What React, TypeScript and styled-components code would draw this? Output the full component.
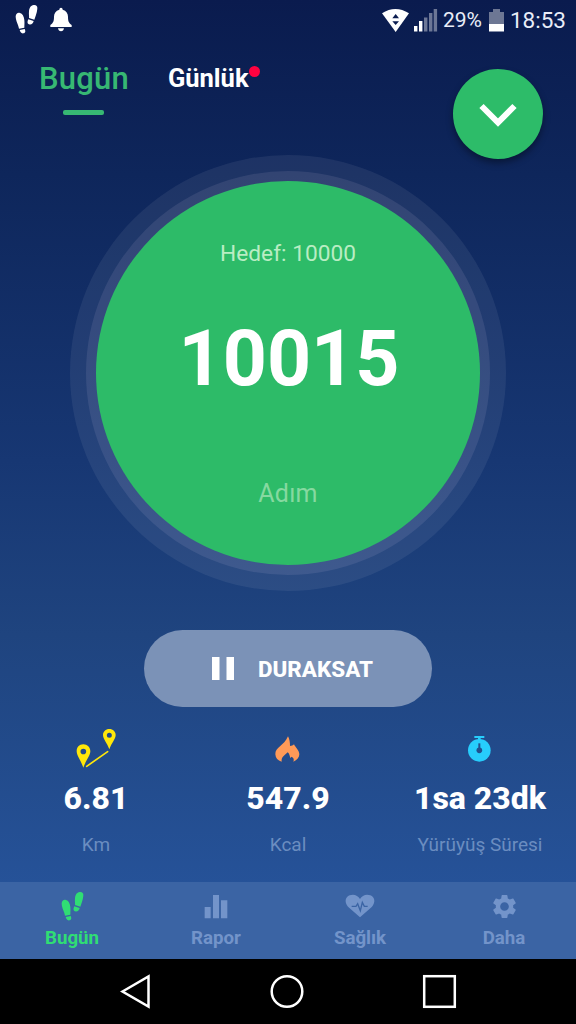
import React from "react";
import styled, { createGlobalStyle } from "styled-components";

const GlobalStyle = createGlobalStyle`
  * { box-sizing: border-box; }
  body { margin: 0; background: #000; font-family: Roboto, "Noto Sans", sans-serif; }
  svg { display: block; flex: none; overflow: visible; }
`;

const Screen = styled.main`
  width: 576px;
  height: 1024px;
  display: flex;
  flex-direction: column;
  overflow: hidden;
  color: #fff;
  background: linear-gradient(180deg, #0a1b4e 0%, #0e265b 17%, #173773 45%, #1f447f 62%, #26539a 88%);
`;

const Text = styled.span<{
  $size: number;
  $weight?: number;
  $line?: number;
  $color?: string;
  $spacing?: number;
}>`
  display: block;
  white-space: nowrap;
  font-size: ${(p) => p.$size}px;
  font-weight: ${(p) => p.$weight ?? 400};
  line-height: ${(p) => p.$line ?? p.$size}px;
  color: ${(p) => p.$color ?? "#fff"};
  letter-spacing: ${(p) => p.$spacing ?? 0}px;
`;

const StatusBar = styled.div`
  height: 38px;
  display: flex;
  justify-content: space-between;
  padding: 0 10px 0 14px;
`;

const StatusLeft = styled.div`
  display: flex;
  gap: 12px;
  padding-top: 4px;
`;

const StatusRight = styled.div`
  display: flex;
  align-items: center;
  height: 40px;
`;

const BatteryIcon = styled.svg`
  margin: 0 6px 0 7px;
`;

const SignalIcon = styled.svg`
  margin: 0 6px 0 5px;
`;

const BellIcon = styled.svg`
  margin-top: 3px;
`;

const Header = styled.header`
  height: 117px;
  display: flex;
  padding: 0 33.5px 0 39px;
`;

const Tab = styled.button<{ $gap?: number; $top?: number }>`
  border: 0;
  padding: ${(p) => p.$top ?? 0}px 0 0;
  background: none;
  font-family: inherit;
  display: flex;
  flex-direction: column;
  align-items: center;
  align-self: flex-start;
  margin-left: ${(p) => p.$gap ?? 0}px;
  position: relative;
`;

const TabLine = styled.span`
  width: 41px;
  height: 5px;
  margin-top: 1px;
  border-radius: 2px;
  background: #37b873;
`;

const Dot = styled.span`
  position: absolute;
  right: -11px;
  top: 28px;
  width: 11px;
  height: 11px;
  border-radius: 50%;
  background: #ff0240;
`;

const RoundButton = styled.button`
  width: 90px;
  height: 90px;
  margin: 30.5px 0 0 auto;
  padding: 4px 0 0;
  border: 0;
  border-radius: 50%;
  background: #2dbc69;
  box-shadow: 0 4px 7px rgba(0, 0, 0, 0.38);
  display: flex;
  align-items: center;
  justify-content: center;
`;

const OuterRing = styled.section`
  width: 436px;
  height: 436px;
  margin: 0 auto;
  flex: none;
  border-radius: 50%;
  background: rgba(255, 255, 255, 0.065);
  display: grid;
  place-items: center;
`;

const InnerRing = styled.div`
  width: 404px;
  height: 404px;
  border-radius: 50%;
  background: rgba(255, 230, 255, 0.09);
  display: grid;
  place-items: center;
`;

const Disc = styled.div`
  width: 384px;
  height: 384px;
  border-radius: 50%;
  background: #2dbb68;
  display: flex;
  flex-direction: column;
  align-items: center;
  padding-top: 58px;
`;

const StepCount = styled(Text)`
  margin: 58px 0 78px 2px;
`;

const PauseButton = styled.button`
  width: 288px;
  height: 77px;
  margin: 38.5px auto 0;
  flex: none;
  border: 0;
  padding: 0 0 0 68px;
  border-radius: 39px;
  background: #7b92b7;
  font-family: inherit;
  display: flex;
  align-items: center;
  gap: 24px;
`;

const PauseLabel = styled(Text)`
  padding-top: 2px;
`;

const Stats = styled.section`
  flex: 1;
  display: grid;
  grid-template-columns: repeat(3, 192px);
  padding-top: 22.5px;
`;

const Stat = styled.div`
  display: flex;
  flex-direction: column;
  align-items: center;
`;

const StatLabel = styled(Text)`
  margin-top: 8px;
`;

const BottomNav = styled.nav`
  height: 77px;
  flex: none;
  display: grid;
  grid-template-columns: repeat(4, 144px);
  background: #3b64a4;
`;

const NavItem = styled.button`
  border: 0;
  padding: 7px 0 0;
  background: none;
  font-family: inherit;
  display: flex;
  flex-direction: column;
  align-items: center;
`;

const NavIcon = styled.span`
  height: 36px;
  padding-bottom: 2px;
  display: flex;
  align-items: center;
`;

const SystemBar = styled.footer`
  height: 65px;
  flex: none;
  background: #000;
  display: flex;
  align-items: center;
  justify-content: center;
`;

const muted = "#7394ca";

function Footprints({ color }: { color: string }) {
  return (
    <svg width="24" height="30" viewBox="-2 0 72 90" fill={color}>
      <path d="M3 37C4 29 9 25 16 27C23 29 28 37 29 48C30 56 29 65 29 71L13 74C12 65 3 51 3 37Z" />
      <path d="M15 78L30 75C33 81 33 87 26 88C19 89 17 84 15 78Z" />
      <path d="M68 14C69 6 64 2 57 3C48 4 44 12 43 22C42 30 44 37 43 42L59 47C61 40 67 27 68 14Z" />
      <path d="M41 46L57 51C55 59 50 63 43 61C37 59 38 52 41 46Z" />
    </svg>
  );
}

function Bell() {
  return (
    <BellIcon width="22" height="25" viewBox="0 0 66 75" fill="#fff">
      <path d="M33 2C36 2 38 4 38 8C49 11 54 19 54 29C54 42 56 47 65 54V60H1V54C10 47 12 42 12 29C12 19 17 11 28 8C28 4 30 2 33 2Z" />
      <path d="M24 64H42C41 70 38 73 33 73C28 73 25 70 24 64Z" />
    </BellIcon>
  );
}

function Wifi() {
  return (
    <svg width="27" height="23" viewBox="0 0 81 69">
      <path d="M0 13Q40-13 81 13L41 69Z" fill="#fff" />
      <path d="M41 15L51 28H31ZM31 37H51L41 48Z" fill="#0b1d50" />
    </svg>
  );
}

function Signal() {
  const bars = [
    [0, 17, 1],
    [5, 12, 1],
    [10, 8.5, 0.4],
    [15, 4, 0.4],
    [19.7, 0, 0.4],
  ];
  return (
    <SignalIcon width="23" height="23" viewBox="0 0 23 23">
      {bars.map(([x, y, o]) => (
        <rect key={x} x={x} y={y} width="3.400" height={22.5 - y} fill="#fff" opacity={o} />
      ))}
    </SignalIcon>
  );
}

function Battery() {
  return (
    <BatteryIcon width="15" height="23" viewBox="0 0 15 23">
      <path d="M4 0H11V3H15V15H0V3H4Z" fill="#6d7794" />
      <path d="M0 15H15V22.5H0Z" fill="#fff" />
    </BatteryIcon>
  );
}

function RouteIcon() {
  return (
    <svg width="40" height="40" viewBox="0 0 120 120" fill="#ffe70a">
      <path fillRule="evenodd" d="M22 46C9 46 2 55 2 67C2 80 15 95 22 116C29 95 43 80 43 67C43 55 34 46 22 46ZM22 59A8.500 8.500 0 1 1 22 76A8.500 8.500 0 1 1 22 59Z" />
      <path fillRule="evenodd" d="M100 0C89 0 81 8 81 18C81 30 93 41 100 61C107 41 119 30 119 18C119 8 111 0 100 0ZM100 11A7.500 7.500 0 1 1 100 26A7.500 7.500 0 1 1 100 11Z" />
      <path d="M32 112L95 68" stroke="#ffe70a" strokeWidth="5" strokeLinecap="round" />
    </svg>
  );
}

function FlameIcon() {
  return (
    <svg width="40" height="40" viewBox="0 0 120 120" fill="#ff9a58">
      <path d="M60 22C65 30 66 42 66 51C71 51 75 49 78 46C82 55 94 65 94 76C94 86 87 93 76 98C79 91 77 86 71 83L67 87C65 80 64 74 59 70C51 78 39 84 41 98C29 95 23 88 22 76C21 55 48 51 60 22Z" />
    </svg>
  );
}

function StopwatchIcon() {
  return (
    <svg width="40" height="40" viewBox="0 0 120 120">
      <path d="M43 21H73V27H62V34H54V27H43Z" fill="#27cdfc" />
      <circle cx="58" cy="64" r="34" fill="#27cdfc" />
      <path d="M58 43V60" stroke="#21508e" strokeWidth="6" />
      <circle cx="58" cy="64" r="8.500" fill="#21508e" />
    </svg>
  );
}

function ReportIcon() {
  return (
    <svg width="24" height="25" viewBox="0 0 72 75" fill={muted}>
      <path d="M2 39H20V73H2ZM27 3H45V73H27ZM51 19H70V73H51Z" />
    </svg>
  );
}

function HealthIcon() {
  return (
    <svg width="30" height="24" viewBox="0 0 90 72">
      <path d="M45 70L9 38C-2 26 0 9 14 4C26-1 39 4 45 15C51 4 64-1 76 4C90 9 92 26 81 38Z" fill={muted} />
      <path d="M20 37H33L38 29L46 50L52 25L58 37H68" fill="none" stroke="#3b64a4" strokeWidth="4" />
    </svg>
  );
}

function SettingsIcon() {
  return (
    <svg width="29" height="29" viewBox="0 0 24 24" fill={muted}>
      <path d="M19.140 12.940c.04-.3.06-.61.06-.94 0-.32-.02-.64-.07-.94l2.030-1.580c.18-.14.23-.41.12-.61l-1.920-3.320c-.12-.22-.37-.29-.59-.22l-2.390.96c-.5-.38-1.030-.7-1.620-.94l-.36-2.540c-.04-.24-.24-.41-.48-.41h-3.840c-.24 0-.43.17-.47.41l-.36 2.540c-.59.24-1.130.57-1.620.94l-2.390-.96c-.22-.08-.47 0-.59.22L2.740 8.870c-.12.21-.08.47.12.61l2.030 1.580c-.05.3-.09.63-.09.94s.02.64.07.94l-2.030 1.580c-.18.14-.23.41-.12.61l1.920 3.320c.12.22.37.29.59.22l2.390-.96c.5.38 1.030.7 1.620.94l.36 2.540c.05.24.24.41.48.41h3.840c.24 0 .44-.17.47-.41l.36-2.540c.59-.24 1.130-.56 1.620-.94l2.390.96c.22.08.47 0 .59-.22l1.920-3.320c.12-.22.07-.47-.12-.61l-2.010-1.580zM12 15.600c-1.980 0-3.600-1.620-3.600-3.600s1.620-3.600 3.600-3.600 3.600 1.620 3.600 3.600-1.620 3.600-3.600 3.600z" />
    </svg>
  );
}

const stats = [
  { icon: <RouteIcon />, value: "6.81", label: "Km" },
  { icon: <FlameIcon />, value: "547.9", label: "Kcal" },
  { icon: <StopwatchIcon />, value: "1sa 23dk", label: "Yürüyüş Süresi" },
];

const navItems = [
  { icon: <Footprints color="#30dd74" />, label: "Bugün", color: "#30dd74" },
  { icon: <ReportIcon />, label: "Rapor", color: muted },
  { icon: <HealthIcon />, label: "Sağlık", color: muted },
  { icon: <SettingsIcon />, label: "Daha", color: muted },
];

export default function App() {
  return (
    <>
      <GlobalStyle />
      <Screen>
        <StatusBar>
          <StatusLeft>
            <Footprints color="#fff" />
            <Bell />
          </StatusLeft>
          <StatusRight>
            <Wifi />
            <Signal />
            <Text $size={21} $line={22} $color="#e9edf8">29%</Text>
            <Battery />
            <Text $size={22.5} $line={22} $color="#e9edf8">18:53</Text>
          </StatusRight>
        </StatusBar>

        <Header>
          <Tab $top={11}>
            <Text $size={31} $weight={500} $line={60} $color="#37b873" $spacing={0.2}>Bugün</Text>
            <TabLine />
          </Tab>
          <Tab $gap={39}>
            <Text $size={25.5} $weight={700} $line={80}>Günlük</Text>
            <Dot />
          </Tab>
          <RoundButton aria-label="Aç">
            <svg width="38" height="24" viewBox="0 0 38 24">
              <path d="M2.500 2L19 18.500L35.500 2" fill="none" stroke="#fff" strokeWidth="6" />
            </svg>
          </RoundButton>
        </Header>

        <OuterRing>
          <InnerRing>
            <Disc>
              <Text $size={22.7} $line={30} $color="#b9edc3">Hedef: 10000</Text>
              <StepCount $size={77} $weight={700} $line={64}>10015</StepCount>
              <Text $size={25} $line={50} $color="#86d9a0" $spacing={0.3}>Adım</Text>
            </Disc>
          </InnerRing>
        </OuterRing>

        <PauseButton>
          <svg width="22" height="23" viewBox="0 0 22 23">
            <path d="M0 0H7.500V23H0ZM14.500 0H22V23H14.500Z" fill="#fff" />
          </svg>
          <PauseLabel $size={22.4} $weight={800} $line={30}>DURAKSAT</PauseLabel>
        </PauseButton>

        <Stats>
          {stats.map((s) => (
            <Stat key={s.label}>
              {s.icon}
              <Text $size={32} $weight={800} $line={58}>{s.value}</Text>
              <StatLabel $size={19} $line={20} $color="#6b8dc0">{s.label}</StatLabel>
            </Stat>
          ))}
        </Stats>

        <BottomNav>
          {navItems.map((n) => (
            <NavItem key={n.label}>
              <NavIcon>{n.icon}</NavIcon>
              <Text $size={18.7} $weight={700} $line={26} $color={n.color}>{n.label}</Text>
            </NavItem>
          ))}
        </BottomNav>

        <SystemBar>
          <svg width="576" height="65" viewBox="0 0 576 65" fill="none" stroke="#fff" strokeWidth="2.500">
            <path d="M122.500 32.500L148.500 17.500V47.500Z" />
            <circle cx="287" cy="32.500" r="15.300" />
            <rect x="424.200" y="17.200" width="30.600" height="30.600" />
          </svg>
        </SystemBar>
      </Screen>
    </>
  );
}
